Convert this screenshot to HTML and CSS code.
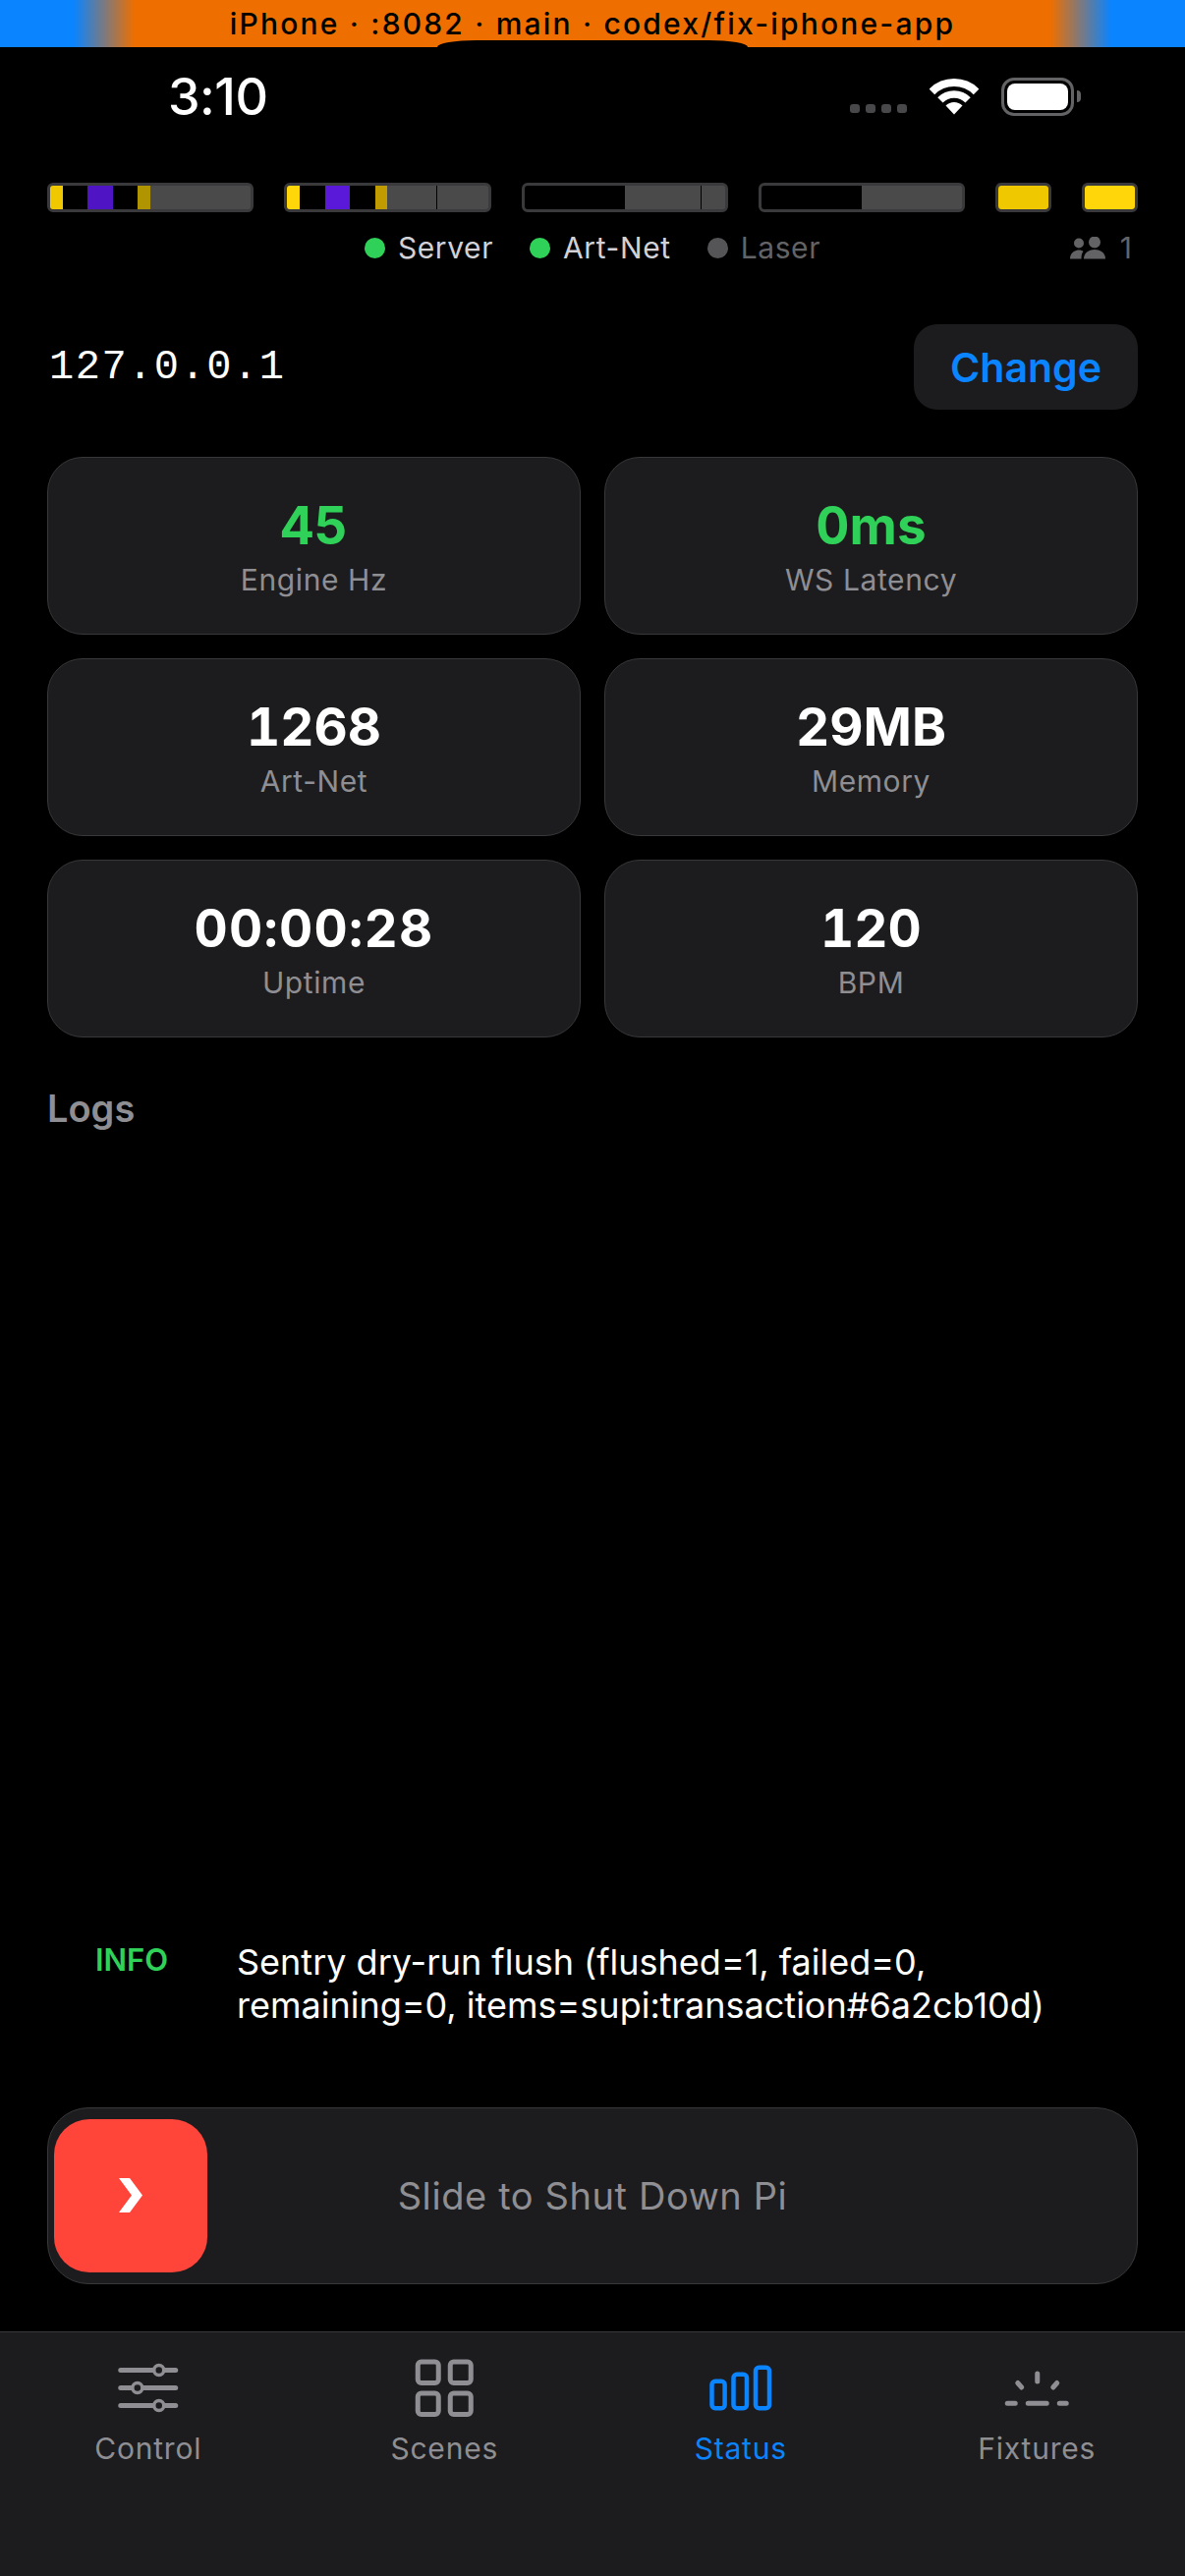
FILE: index.html
```html
<!DOCTYPE html>
<html lang="en">
<head>
    <meta charset="UTF-8">
    <meta name="viewport" content="width=device-width, initial-scale=1.0">
    <title>Status</title>
    <link rel="stylesheet" href="styles.css">
</head>
<body>
    <div class="dev-banner">iPhone · :8082 · main · codex/fix-iphone-app</div>
    <div class="notch"></div>

    <div class="status-bar">
        <span class="clock">3:10</span>
        <div class="status-icons">
            <div class="signal"><i></i><i></i><i></i><i></i></div>
            <svg class="wifi" viewBox="0 0 50 37" width="50" height="37">
                <path d="M2.4 13.4A32 32 0 0 1 47.6 13.4" fill="none" stroke="#fff" stroke-width="8"/>
                <path d="M10.9 21.9A20 20 0 0 1 39.1 21.9" fill="none" stroke="#fff" stroke-width="7.5"/>
                <path d="M25 36.5L16.5 27.5A12 12 0 0 1 33.5 27.5Z" fill="#fff"/>
            </svg>
            <div class="battery"><div class="battery-fill"></div></div>
            <div class="battery-cap"></div>
        </div>
    </div>

    <div class="meters">
        <div class="meter">
            <span class="seg seg-1 dim-yellow"></span>
            <span class="seg seg-2 off"></span>
            <span class="seg seg-2 dim-purple"></span>
            <span class="seg seg-2 off"></span>
            <span class="seg seg-1 dim-amber"></span>
            <span class="seg seg-8 empty"></span>
        </div>
        <div class="meter">
            <span class="seg seg-1 yellow"></span>
            <span class="seg seg-2 off"></span>
            <span class="seg seg-2 purple"></span>
            <span class="seg seg-2 off"></span>
            <span class="seg seg-1 amber"></span>
            <span class="seg seg-8 empty"></span>
            <span class="tick tick-a"></span>
        </div>
        <div class="meter">
            <span class="seg seg-8 off"></span>
            <span class="seg seg-8 empty"></span>
            <span class="tick tick-b"></span>
        </div>
        <div class="meter">
            <span class="seg seg-8 off"></span>
            <span class="seg seg-8 empty"></span>
        </div>
        <div class="meter">
            <span class="seg seg-1 dim-yellow"></span>
        </div>
        <div class="meter">
            <span class="seg seg-1 yellow"></span>
        </div>
    </div>

    <div class="legend">
        <div class="legend-center">
            <div class="legend-item"><span class="dot dot-on"></span>Server</div>
            <div class="legend-item"><span class="dot dot-on"></span>Art-Net</div>
            <div class="legend-item legend-off"><span class="dot dot-off"></span>Laser</div>
        </div>
        <div class="clients">
            <svg viewBox="0 0 36 23" width="36" height="23" fill="#636366">
                <circle cx="9" cy="6.5" r="5"/>
                <circle cx="25" cy="5.5" r="6"/>
                <path d="M0 22.5C0 17 4 13.5 9 13.5C11 13.5 12.5 14 13.5 15C12 16.5 11.5 19 11.5 22.5Z"/>
                <path d="M14 22.5C14 16.5 19 13 25 13C31 13 36 16.5 36 22.5Z"/>
            </svg>
            <span>1</span>
        </div>
    </div>

    <div class="address-row">
        <span class="address">127.0.0.1</span>
        <button class="change-btn">Change</button>
    </div>

    <div class="stats">
        <div class="stat-card"><div class="stat-value green">45</div><div class="stat-label">Engine Hz</div></div>
        <div class="stat-card"><div class="stat-value green">0ms</div><div class="stat-label">WS Latency</div></div>
        <div class="stat-card"><div class="stat-value">1268</div><div class="stat-label">Art-Net</div></div>
        <div class="stat-card"><div class="stat-value">29MB</div><div class="stat-label">Memory</div></div>
        <div class="stat-card"><div class="stat-value stat-time">00:00:28</div><div class="stat-label">Uptime</div></div>
        <div class="stat-card"><div class="stat-value">120</div><div class="stat-label">BPM</div></div>
    </div>

    <div class="logs">
        <h2 class="logs-title">Logs</h2>
        <div class="log-entry">
            <span class="log-level">INFO</span>
            <span class="log-message">Sentry dry-run flush (flushed=1, failed=0, remaining=0, items=supi:transaction#6a2cb10d)</span>
        </div>
    </div>

    <div class="slider">
        <div class="slider-thumb">
            <svg viewBox="0 0 24 35" width="24" height="35"><path d="M0 0H11L24 17.5L11 35H0L13 17.5Z" fill="#fff"/></svg>
        </div>
        <span class="slider-text">Slide to Shut Down Pi</span>
    </div>

    <nav class="tabbar">
        <div class="tab">
            <svg class="tab-icon" viewBox="0 0 70 64" width="70" height="64" fill="none" stroke="#8e8e93" stroke-width="5" stroke-linecap="round">
                <path d="M6.75 14.5H62.75M6.75 32.5H62.75M6.75 50.5H62.75"/>
                <circle cx="45.75" cy="14.5" r="5" fill="#1c1c1e" stroke-width="3.5"/>
                <circle cx="23.85" cy="32.5" r="5" fill="#1c1c1e" stroke-width="3.5"/>
                <circle cx="45.75" cy="50.5" r="5" fill="#1c1c1e" stroke-width="3.5"/>
            </svg>
            <span>Control</span>
        </div>
        <div class="tab">
            <svg class="tab-icon" viewBox="0 0 70 64" width="70" height="64" fill="none" stroke="#8e8e93" stroke-width="5">
                <rect x="8.25" y="6" width="21" height="21.5" rx="3.5"/>
                <rect x="41.25" y="6" width="21" height="21.5" rx="3.5"/>
                <rect x="8.25" y="38" width="21" height="21.5" rx="3.5"/>
                <rect x="41.25" y="38" width="21" height="21.5" rx="3.5"/>
            </svg>
            <span>Scenes</span>
        </div>
        <div class="tab tab-active">
            <svg class="tab-icon" viewBox="0 0 70 64" width="70" height="64" fill="none" stroke="#0a84ff" stroke-width="4.5">
                <rect x="5.5" y="25.75" width="13.1" height="27.5" rx="3.5"/>
                <rect x="27.5" y="18.75" width="13.5" height="34.5" rx="3.5"/>
                <rect x="50" y="11.75" width="14" height="41.5" rx="3.5"/>
            </svg>
            <span>Status</span>
        </div>
        <div class="tab">
            <svg class="tab-icon" viewBox="0 0 70 64" width="70" height="64" fill="none" stroke="#8e8e93" stroke-width="5" stroke-linecap="round">
                <path d="M35.75 18V26M15.75 27.5L19.75 32M55.75 27.5L51.75 32"/>
                <path d="M5.25 48.2H13.25M26.25 48.2H45.25M58.25 48.2H65.25"/>
            </svg>
            <span>Fixtures</span>
        </div>
    </nav>
</body>
</html>
```

FILE: styles.css
```css
html, body {
    margin: 0;
    padding: 0;
}

body {
    position: relative;
    width: 1206px;
    height: 2622px;
    overflow: hidden;
    display: flex;
    flex-direction: column;
    background-color: #000;
    color: #fff;
    font-family: Inter, "Noto Sans", sans-serif;
}

.dev-banner {
    height: 48px;
    line-height: 48px;
    text-align: center;
    color: #000;
    font-size: 30px;
    font-weight: 500;
    letter-spacing: 2.2px;
    background: linear-gradient(90deg, #0a84ff 0, #0a84ff 75px, #ee6f00 137px, #ee6f00 1069px, #0a84ff 1131px);
}

.notch {
    position: absolute;
    top: 41px;
    left: 445px;
    width: 316px;
    height: 7px;
    background-color: #000;
    border-radius: 40px 40px 0 0 / 7px 7px 0 0;
}

.status-bar {
    height: 100px;
    margin-bottom: 38px;
    padding: 0 106px 0 171px;
    display: flex;
    justify-content: space-between;
    align-items: center;
}

.clock {
    font-size: 52px;
    font-weight: 500;
    letter-spacing: -0.5px;
}

.status-icons {
    display: flex;
    align-items: center;
}

.signal {
    display: flex;
    gap: 6px;
    margin-top: 24px;
    margin-right: 23px;
}

.signal i {
    width: 10px;
    height: 9px;
    border-radius: 3px;
    background-color: #48484a;
}

.wifi {
    margin-right: 23px;
}

.battery {
    box-sizing: border-box;
    width: 74px;
    height: 39px;
    padding: 3px;
    border: 3px solid #636366;
    border-radius: 13px;
}

.battery-fill {
    height: 100%;
    background-color: #fff;
    border-radius: 8px;
}

.battery-cap {
    width: 4px;
    height: 12px;
    margin-left: 3px;
    background-color: #636366;
    border-radius: 0 6px 6px 0;
}

.meters {
    display: grid;
    grid-template-columns: repeat(4, 1fr) 57px 57px;
    column-gap: 31px;
    margin: 0 48px;
}

.meter {
    position: relative;
    box-sizing: border-box;
    height: 30px;
    display: flex;
    overflow: hidden;
    background-color: #4a4a4a;
    border: 3px solid #3a3a3c;
    border-radius: 6px;
}

.seg { display: block; }
.seg-1 { flex: 1; }
.seg-2 { flex: 2; }
.seg-8 { flex: 8; }

.off { background-color: #000; }
.empty { background-color: #4a4a4a; }
.yellow { background-color: #ffd60a; }
.purple { background-color: #5a18d8; }
.amber { background-color: #c09c00; }
.dim-yellow { background-color: #f0c800; }
.dim-purple { background-color: #4f14c4; }
.dim-amber { background-color: #b09400; }

.tick {
    position: absolute;
    top: 0;
    bottom: 0;
    width: 1px;
    background-color: #000;
}

.tick-a { left: 152px; }
.tick-b { left: 179px; }

.legend {
    margin: 24px 48px 0;
    height: 24px;
    display: grid;
    grid-template-columns: 1fr auto 1fr;
    grid-template-rows: 24px;
    align-items: center;
}

.legend-center {
    grid-column: 2;
    display: flex;
    gap: 37px;
}

.legend-item {
    display: flex;
    align-items: center;
    gap: 13px;
    font-size: 30px;
    font-weight: 400;
    line-height: 24px;
    letter-spacing: 0.6px;
    color: #d1d1d6;
}

.legend-off {
    color: #636366;
}

.dot {
    width: 21px;
    height: 21px;
    border-radius: 50%;
}

.dot-on { background-color: #30d158; }
.dot-off { background-color: #555557; }

.clients {
    grid-column: 3;
    justify-self: end;
    display: flex;
    align-items: center;
    gap: 15px;
    padding-right: 6px;
    font-size: 30px;
    line-height: 24px;
    color: #636366;
}

.address-row {
    margin: 66px 48px 0;
    display: flex;
    justify-content: space-between;
    align-items: center;
}

.address {
    margin-left: 2px;
    font-family: "Liberation Mono", monospace;
    font-size: 42px;
    letter-spacing: 1.5px;
}

.change-btn {
    width: 228px;
    height: 87px;
    padding: 0;
    border: none;
    border-radius: 24px;
    background-color: #1c1c1e;
    color: #0a84ff;
    font-family: inherit;
    font-size: 41px;
    font-weight: 600;
}

.stats {
    margin: 48px 48px 0;
    display: grid;
    grid-template-columns: 1fr 1fr;
    gap: 24px;
}

.stat-card {
    box-sizing: border-box;
    height: 181px;
    display: flex;
    flex-direction: column;
    align-items: center;
    justify-content: center;
    background-color: #1c1c1e;
    border: 1.5px solid #38383a;
    border-radius: 36px;
}

.stat-value {
    font-size: 53px;
    font-weight: 700;
    font-feature-settings: "tnum";
    line-height: 66px;
}

.stat-time {
    letter-spacing: 1.25px;
}

.green {
    color: #30d158;
}

.stat-label {
    margin-top: 3.5px;
    font-size: 30px;
    line-height: 38px;
    letter-spacing: 0.6px;
    color: #8e8e93;
}

.logs {
    flex: 1;
    display: flex;
    flex-direction: column;
    padding: 0 48px;
}

.logs-title {
    margin: 48px 0 0;
    font-size: 38px;
    font-weight: 600;
    line-height: 48px;
    color: #8e8e93;
}

.log-entry {
    margin-top: auto;
    padding: 0 0 82px 49px;
    display: flex;
}

.log-level {
    width: 144px;
    flex-shrink: 0;
    font-size: 31px;
    font-weight: 600;
    line-height: 44px;
    color: #30d158;
}

.log-message {
    width: 830px;
    margin-top: 3px;
    font-size: 36px;
    line-height: 43.5px;
}

.slider {
    position: relative;
    box-sizing: border-box;
    height: 180px;
    margin: 0 48px 48px;
    display: flex;
    align-items: center;
    justify-content: center;
    background-color: #1c1c1e;
    border: 1.5px solid #38383a;
    border-radius: 42px;
}

.slider-thumb {
    position: absolute;
    top: 10.5px;
    left: 5.5px;
    width: 156px;
    height: 156px;
    display: flex;
    align-items: center;
    justify-content: center;
    background-color: #ff453a;
    border-radius: 36px;
}

.slider-text {
    font-size: 38px;
    letter-spacing: 0.6px;
    color: #8e8e93;
}

.tabbar {
    box-sizing: border-box;
    height: 249px;
    padding-top: 24px;
    display: grid;
    grid-template-columns: repeat(4, 1fr);
    background-color: #1c1c1e;
    border-top: 1.5px solid #38383a;
}

.tab {
    display: flex;
    flex-direction: column;
    align-items: center;
    font-size: 30px;
    font-weight: 400;
    letter-spacing: 0.8px;
    line-height: 40px;
    color: #8e8e93;
}

.tab-active {
    color: #0a84ff;
}

.tab-icon {
    display: block;
    margin-bottom: 9.5px;
}
```
